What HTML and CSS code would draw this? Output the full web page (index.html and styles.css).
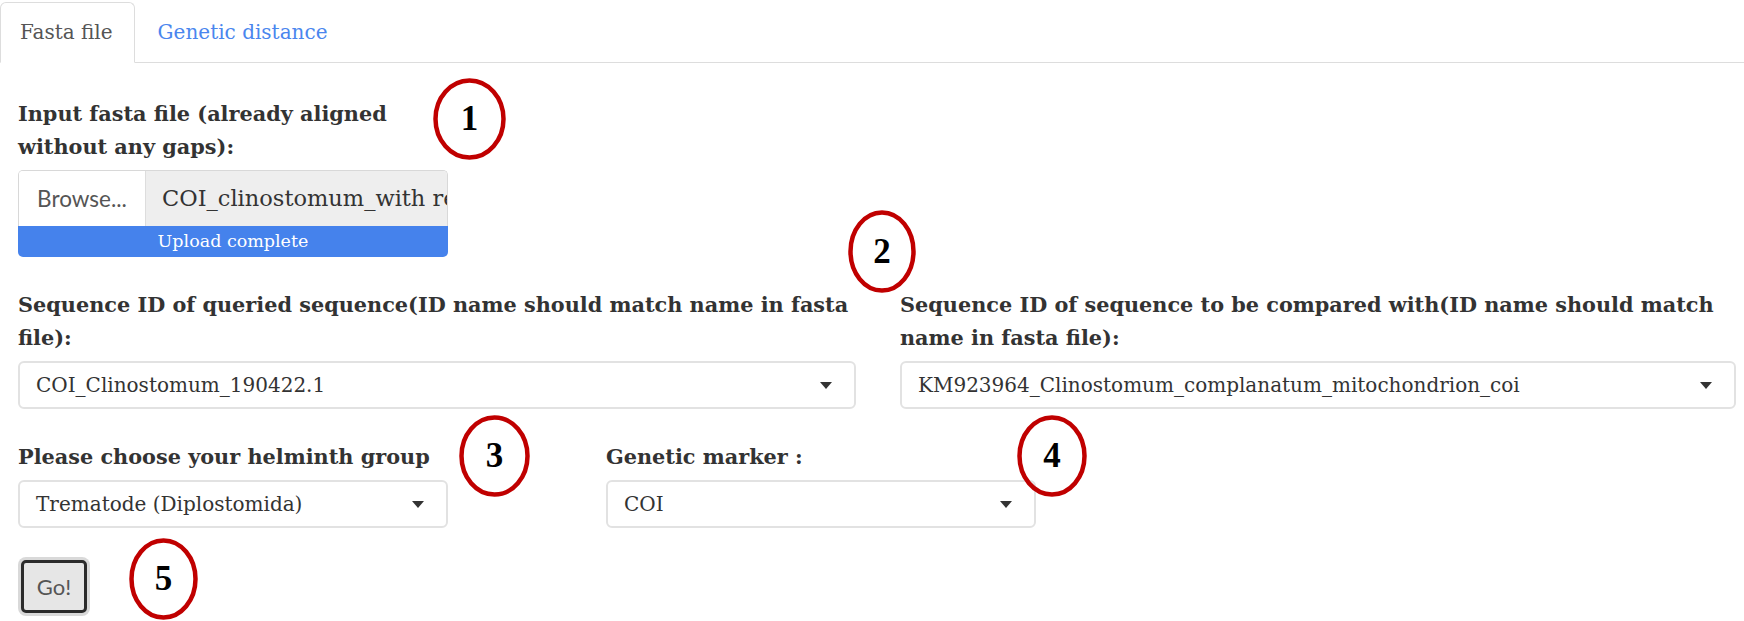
FILE: index.html
```html
<!DOCTYPE html>
<html>
<head>
<meta charset="utf-8">
<link rel="stylesheet" href="styles.css">
</head>
<body>
<div class="page">
  <nav class="tabs">
    <div class="tab active">Fasta file</div>
    <div class="tab link">Genetic distance</div>
  </nav>
  <main class="content">
    <section class="group">
      <label class="lbl lbl-narrow">Input fasta file (already aligned without any gaps):</label>
      <div class="file">
        <div class="file-btn">Browse...</div>
        <div class="file-name">COI_clinostomum_with reference.fasta</div>
      </div>
      <div class="progress">Upload complete</div>
    </section>

    <section class="row two">
      <div class="field">
        <label class="lbl">Sequence ID of queried sequence(ID name should match name in fasta file):</label>
        <div class="select"><span class="sel-text">COI_Clinostomum_190422.1</span><span class="caret"></span></div>
      </div>
      <div class="field">
        <label class="lbl">Sequence ID of sequence to be compared with(ID name should match name in fasta file):</label>
        <div class="select"><span class="sel-text">KM923964_Clinostomum_complanatum_mitochondrion_coi</span><span class="caret"></span></div>
      </div>
    </section>

    <section class="row three">
      <div class="field">
        <label class="lbl">Please choose your helminth group</label>
        <div class="select short"><span class="sel-text">Trematode (Diplostomida)</span><span class="caret"></span></div>
      </div>
      <div class="field">
        <label class="lbl">Genetic marker :</label>
        <div class="select short"><span class="sel-text">COI</span><span class="caret"></span></div>
      </div>
    </section>

    <div class="actions">
      <button class="go">Go!</button>
    </div>
  </main>

  <div class="mark m1"><svg viewBox="0 0 73 82"><ellipse cx="36.5" cy="41" rx="34" ry="38.5"/></svg><span>1</span></div>
  <div class="mark m2"><svg viewBox="0 0 68 83"><ellipse cx="34" cy="41.5" rx="31.5" ry="39"/></svg><span>2</span></div>
  <div class="mark m3"><svg viewBox="0 0 71 82"><ellipse cx="35.5" cy="41" rx="33" ry="38.5"/></svg><span>3</span></div>
  <div class="mark m4"><svg viewBox="0 0 70 82"><ellipse cx="35" cy="41" rx="32.5" ry="38.5"/></svg><span>4</span></div>
  <div class="mark m5"><svg viewBox="0 0 69 82"><ellipse cx="34.5" cy="41" rx="32" ry="38.5"/></svg><span>5</span></div>
</div>
</body>
</html>
```
FILE: styles.css
```css
html, body {
  margin: 0;
  padding: 0;
  background: #ffffff;
}
body {
  font-family: "DejaVu Serif", "Liberation Serif", serif;
  color: #333333;
}
.page {
  position: relative;
  width: 1744px;
  height: 621px;
  overflow: hidden;
}
.tabs {
  display: flex;
  padding-top: 2px;
  border-bottom: 1px solid #dddddd;
  height: 60px;
}
.tab {
  font-size: 20px;
  line-height: 58px;
  padding: 0 21px 0 19px;
  margin-right: 2px;
  border: 1px solid transparent;
  border-radius: 6px 6px 0 0;
  margin-bottom: -1px;
}
.tab.active {
  border-color: #dddddd;
  border-bottom-color: #ffffff;
  background: #ffffff;
  color: #555555;
}
.tab.link {
  color: #4a86ee;
  padding-left: 20px;
}
.content {
  padding: 34px 8px 0 18px;
}
.lbl {
  display: block;
  font-weight: bold;
  font-size: 20.8px;
  line-height: 33px;
  color: #333333;
}
.lbl-narrow {
  width: 400px;
}
.file {
  display: flex;
  width: 428px;
  height: 55px;
  margin-top: 7px;
  border: 1px solid #d8d8d8;
  border-bottom: none;
  border-radius: 5px 5px 0 0;
  overflow: hidden;
}
.file-btn {
  width: 126px;
  flex: none;
  font-family: "Lato", "Open Sans", sans-serif;
  font-size: 22.5px;
  color: #555555;
  display: flex;
  align-items: center;
  justify-content: center;
  background: #ffffff;
  border-right: 1px solid #dddddd;
}
.file-name {
  flex: 1;
  background: #eeeeee;
  font-size: 22.5px;
  line-height: 55px;
  padding-left: 16px;
  white-space: nowrap;
  overflow: hidden;
  color: #333333;
}
.progress {
  width: 430px;
  height: 31px;
  background: #4582ec;
  border-radius: 0 0 5px 5px;
  color: #ffffff;
  font-size: 17.5px;
  line-height: 31px;
  text-align: center;
}
.row {
  display: grid;
  margin-top: 31px;
}
.row.two {
  grid-template-columns: 838px 836px;
  column-gap: 44px;
}
.row.three {
  grid-template-columns: 588px 430px;
}
.select {
  display: flex;
  align-items: center;
  justify-content: space-between;
  height: 44px;
  margin-top: 7px;
  border: 2px solid #e2e2e2;
  border-radius: 6px;
  padding: 0 22px 0 16px;
  font-size: 20px;
  color: #333333;
  background: #ffffff;
}
.select.short {
  width: 388px;
}
.sel-text {
  white-space: nowrap;
}
.caret {
  width: 0;
  height: 0;
  border-left: 6.5px solid transparent;
  border-right: 6.5px solid transparent;
  border-top: 7px solid #333333;
}
.actions {
  margin-top: 32px;
  padding-left: 3px;
}
.go {
  width: 66px;
  height: 53px;
  background: #e6e6e6;
  border: 3px solid #2b2b2b;
  border-radius: 5px;
  box-shadow: 0 0 0 3px #d9d9d9;
  font-family: "Lato", "Open Sans", sans-serif;
  font-size: 22px;
  color: #555555;
  padding: 0;
}
.mark {
  position: absolute;
  display: flex;
  align-items: center;
  justify-content: center;
}
.mark svg {
  position: absolute;
  inset: 0;
  width: 100%;
  height: 100%;
}
.mark ellipse {
  fill: none;
  stroke: #c00000;
  stroke-width: 4.5;
}
.mark span {
  position: relative;
  font-family: "Liberation Serif", serif;
  font-weight: bold;
  font-size: 35px;
  color: #000000;
}
.m1 { left: 433px; top: 78px; width: 73px; height: 82px; }
.m2 { left: 848px; top: 210px; width: 68px; height: 83px; }
.m3 { left: 459px; top: 415px; width: 71px; height: 82px; }
.m4 { left: 1017px; top: 415px; width: 70px; height: 82px; }
.m5 { left: 129px; top: 538px; width: 69px; height: 82px; }
```
